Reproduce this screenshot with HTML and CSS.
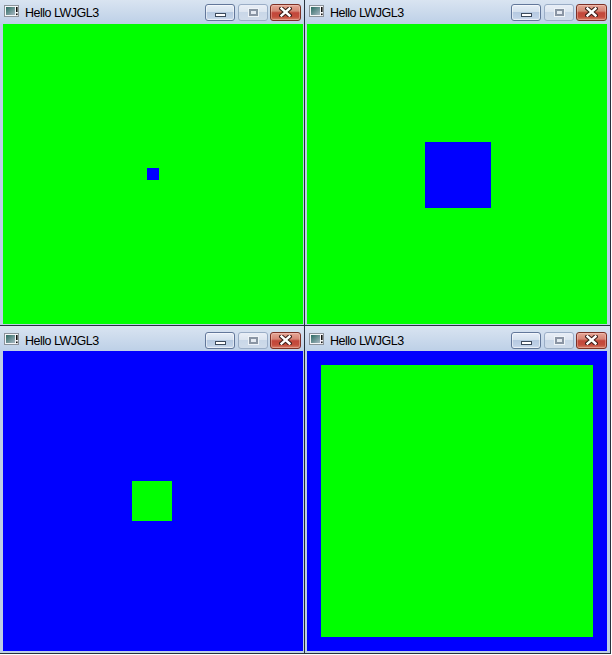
FILE: index.html
```html
<!DOCTYPE html>
<html>
<head>
<meta charset="utf-8">
<link rel="stylesheet" href="styles.css">
</head>
<body>
<div class="desk">

  <div class="win tl">
    <div class="titlebar">
      <svg class="appicon" width="16" height="13" viewBox="0 0 16 13"><defs><linearGradient id="g1" x1="0" y1="0" x2="1" y2="1"><stop offset="0" stop-color="#2d6a63"/><stop offset="1" stop-color="#a9b8c4"/></linearGradient></defs><rect x="0.5" y="0.5" width="14" height="11" fill="#f4f6f8" stroke="#8b929a"/><rect x="2" y="2" width="9" height="8" fill="url(#g1)"/><rect x="12" y="2" width="1.6" height="5" fill="#111"/><rect x="12" y="8.5" width="1.6" height="1.6" fill="#111"/></svg>
      <span class="title">Hello LWJGL3</span>
      <div class="caps">
        <span class="cap min"><i></i></span>
        <span class="cap max"><i></i></span>
        <span class="cap close"><svg width="13" height="10" viewBox="0 0 13 10"><path d="M2.5 1.5 L10.5 8.5 M10.5 1.5 L2.5 8.5" stroke="#3b1b16" stroke-width="4.4" stroke-linecap="square"/><path d="M2.5 1.5 L10.5 8.5 M10.5 1.5 L2.5 8.5" stroke="#fff" stroke-width="2.4" stroke-linecap="square"/></svg></span>
      </div>
    </div>
    <div class="frame"><div class="client green"><div class="quad blue q12"></div></div></div>
  </div>

  <div class="win tr">
    <div class="titlebar">
      <svg class="appicon" width="16" height="13" viewBox="0 0 16 13"><defs><linearGradient id="g2" x1="0" y1="0" x2="1" y2="1"><stop offset="0" stop-color="#2d6a63"/><stop offset="1" stop-color="#a9b8c4"/></linearGradient></defs><rect x="0.5" y="0.5" width="14" height="11" fill="#f4f6f8" stroke="#8b929a"/><rect x="2" y="2" width="9" height="8" fill="url(#g2)"/><rect x="12" y="2" width="1.6" height="5" fill="#111"/><rect x="12" y="8.5" width="1.6" height="1.6" fill="#111"/></svg>
      <span class="title">Hello LWJGL3</span>
      <div class="caps">
        <span class="cap min"><i></i></span>
        <span class="cap max"><i></i></span>
        <span class="cap close"><svg width="13" height="10" viewBox="0 0 13 10"><path d="M2.5 1.5 L10.5 8.5 M10.5 1.5 L2.5 8.5" stroke="#3b1b16" stroke-width="4.4" stroke-linecap="square"/><path d="M2.5 1.5 L10.5 8.5 M10.5 1.5 L2.5 8.5" stroke="#fff" stroke-width="2.4" stroke-linecap="square"/></svg></span>
      </div>
    </div>
    <div class="frame"><div class="client green"><div class="quad blue q66"></div></div></div>
  </div>

  <div class="win bl">
    <div class="titlebar low">
      <svg class="appicon" width="16" height="13" viewBox="0 0 16 13"><defs><linearGradient id="g3" x1="0" y1="0" x2="1" y2="1"><stop offset="0" stop-color="#2d6a63"/><stop offset="1" stop-color="#a9b8c4"/></linearGradient></defs><rect x="0.5" y="0.5" width="14" height="11" fill="#f4f6f8" stroke="#8b929a"/><rect x="2" y="2" width="9" height="8" fill="url(#g3)"/><rect x="12" y="2" width="1.6" height="5" fill="#111"/><rect x="12" y="8.5" width="1.6" height="1.6" fill="#111"/></svg>
      <span class="title">Hello LWJGL3</span>
      <div class="caps">
        <span class="cap min"><i></i></span>
        <span class="cap max"><i></i></span>
        <span class="cap close"><svg width="13" height="10" viewBox="0 0 13 10"><path d="M2.5 1.5 L10.5 8.5 M10.5 1.5 L2.5 8.5" stroke="#3b1b16" stroke-width="4.4" stroke-linecap="square"/><path d="M2.5 1.5 L10.5 8.5 M10.5 1.5 L2.5 8.5" stroke="#fff" stroke-width="2.4" stroke-linecap="square"/></svg></span>
      </div>
    </div>
    <div class="frame"><div class="client blue"><div class="quad green q40"></div></div></div>
  </div>

  <div class="win br">
    <div class="titlebar low">
      <svg class="appicon" width="16" height="13" viewBox="0 0 16 13"><defs><linearGradient id="g4" x1="0" y1="0" x2="1" y2="1"><stop offset="0" stop-color="#2d6a63"/><stop offset="1" stop-color="#a9b8c4"/></linearGradient></defs><rect x="0.5" y="0.5" width="14" height="11" fill="#f4f6f8" stroke="#8b929a"/><rect x="2" y="2" width="9" height="8" fill="url(#g4)"/><rect x="12" y="2" width="1.6" height="5" fill="#111"/><rect x="12" y="8.5" width="1.6" height="1.6" fill="#111"/></svg>
      <span class="title">Hello LWJGL3</span>
      <div class="caps">
        <span class="cap min"><i></i></span>
        <span class="cap max"><i></i></span>
        <span class="cap close"><svg width="13" height="10" viewBox="0 0 13 10"><path d="M2.5 1.5 L10.5 8.5 M10.5 1.5 L2.5 8.5" stroke="#3b1b16" stroke-width="4.4" stroke-linecap="square"/><path d="M2.5 1.5 L10.5 8.5 M10.5 1.5 L2.5 8.5" stroke="#fff" stroke-width="2.4" stroke-linecap="square"/></svg></span>
      </div>
    </div>
    <div class="frame"><div class="client blue"><div class="quad green q272"></div></div></div>
  </div>

</div>
</body>
</html>
```
FILE: styles.css
```css
html, body {
  margin: 0;
  padding: 0;
  background: #ffffff;
}

.desk {
  display: grid;
  grid-template-columns: 304px 307px;
  grid-template-rows: 325px 329px;
}

.win {
  display: flex;
  flex-direction: column;
  background: #bccee5;
  box-sizing: border-box;
}

.win.tr {
  border-left: 1px solid #26323d;
  border-right: 1px solid #26323d;
}

.win.bl {
  border-top: 1px solid #26323d;
  border-bottom: 1px solid #26323d;
}

.win.br {
  border: 1px solid #26323d;
}

.titlebar {
  height: 24px;
  box-sizing: border-box;
  display: flex;
  align-items: center;
  padding: 0 3px 0 4px;
  background: linear-gradient(#d9e4f1, #bdd0e7);
  font-family: "Liberation Sans", Arial, sans-serif;
  font-size: 12.5px;
  letter-spacing: -0.5px;
  color: #000;
}

.titlebar.low {
  height: 25px;
  padding-top: 3px;
}

.appicon {
  flex: none;
  margin-right: 5px;
  margin-top: -1px;
}

.title {
  flex: 1;
  white-space: nowrap;
  padding-top: 1px;
}

.caps {
  display: flex;
  align-items: center;
  gap: 3px;
}

.cap {
  box-sizing: border-box;
  height: 17px;
  width: 30px;
  border-radius: 3px;
  display: flex;
  align-items: center;
  justify-content: center;
}

.cap.min {
  border: 1px solid #62779a;
  background: linear-gradient(#e6eef8 0%, #d4e0ee 45%, #b6c9e1 50%, #c0d1e7 85%, #d2e0f0 100%);
  box-shadow: inset 0 0 0 1px rgba(255,255,255,0.5);
}

.cap.min i {
  display: block;
  width: 9px;
  height: 2px;
  margin-top: 6px;
  background: #fff;
  border: 1px solid #3c4a5c;
}

.cap.max {
  border: 1px solid #9aadc6;
  background: linear-gradient(#e9eff7 0%, #dce5f0 45%, #c9d7e8 50%, #cfdbea 100%);
  margin-right: -1px;
}

.cap.max i {
  display: block;
  width: 5px;
  height: 3px;
  border: 2px solid #8a95a4;
  background: #e4eaf2;
  box-shadow: 0 0 0 1px #eef3f8;
}

.cap.close {
  width: 31px;
  border: 1px solid #7c3026;
  background: linear-gradient(#e6a797 0%, #d68676 40%, #c2463a 52%, #c54e3e 80%, #d7826e 100%);
  box-shadow: inset 0 0 0 1px rgba(255,220,210,0.35);
}

.frame {
  padding: 0 0 1px 3px;
}

.win.tr .frame {
  padding: 0 3px 1px 2px;
}

.win.bl .frame {
  padding: 0 1px 2px 3px;
}

.win.br .frame {
  padding: 0 3px 2px 2px;
}

.client {
  width: 300px;
  height: 300px;
  display: grid;
  place-items: center;
}

.green { background: #00ff00; }
.blue { background: #0000ff; }

.quad.q12 { width: 12px; height: 12px; }
.quad.q66 { width: 66px; height: 66px; margin: 2px 0 0 2px; }
.quad.q40 { width: 40px; height: 40px; margin: 0 2px 0 0; }
.quad.q272 { width: 272px; height: 272px; }
```
